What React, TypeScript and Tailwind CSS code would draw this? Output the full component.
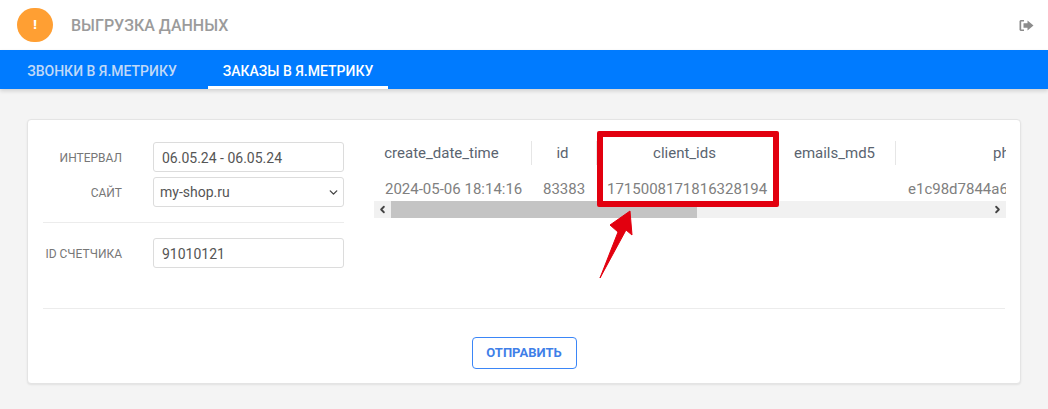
import { ChevronDown, ChevronLeft, ChevronRight } from "lucide-react";

const columns = [
  { name: "create_date_time", value: "2024-05-06 18:14:16", width: "w-[158px]", head: "pr-[22px]", cell: "pl-[11px]", border: true },
  { name: "id", value: "83383", width: "w-[65px]", head: "pr-[3px]", cell: "pl-[11px]", border: true },
  { name: "client_ids", value: "1715008171816328194", width: "w-[179px]", head: "pr-[4px]", cell: "pl-[10px]", border: false },
  { name: "emails_md5", value: "", width: "w-[120px]", head: "pr-[2px]", cell: "pl-[11px]", border: true },
  { name: "phones_md5", value: "e1c98d7844a66d2b1f0a3c7e59b48d10", width: "w-[280px]", head: "pr-[0px]", cell: "pl-[12px]", border: false },
];

const App = () => {
  return (
    <div className="relative w-full h-[409px] overflow-hidden bg-[#f4f4f4] font-['Roboto',sans-serif]">
      <header className="h-[50px] bg-white flex items-center pl-[17px] pr-[14px]">
        <div className="w-[36px] h-[34px] rounded-full bg-[#ff9f33] flex items-center justify-center text-white text-[13px] font-black">
          !
        </div>
        <h1 className="ml-[18px] pt-[2px] text-[16px] font-medium text-[#9b9b9b] uppercase">Выгрузка данных</h1>
        <svg className="ml-auto w-[15px] h-[13px]" viewBox="0 0 15 13" fill="#8c8c8c">
          <path d="M5 1H1.500L0.500 2v9l1 1H5v-1.600H2.200V2.600H5z" />
          <path d="M8.500 1.500L14.500 6.500L8.500 11.500V8.800H4.500V4.200H8.500z" />
        </svg>
      </header>

      <nav className="h-[39px] bg-[#007bff] shadow-[0_2px_4px_rgba(0,0,0,0.15)] flex pl-[12px] gap-[16px]">
        <div className="w-[180px] flex items-center justify-center pt-[4px] text-[14px] font-medium text-[#c0d9f7]">
          ЗВОНКИ В Я.МЕТРИКУ
        </div>
        <div className="w-[180px] flex items-center justify-center pt-[7px] text-[14px] font-medium text-white border-b-[3px] border-white">
          ЗАКАЗЫ В Я.МЕТРИКУ
        </div>
      </nav>

      <main className="px-[27px] pt-[30px]">
        <section className="w-[994px] h-[265px] bg-white border border-[#e4e4e4] rounded-[4px] shadow-[0_1px_2px_rgba(0,0,0,0.08)] px-[15px] flex flex-col">
          <div className="flex h-[189px] border-b border-[#ececec] gap-[30px]">
            <div className="w-[301px] pt-[22px]">
              <div className="flex flex-col gap-[5px]">
                <div className="flex items-center">
                  <label className="w-[79px] pt-[2px] text-right text-[12px] text-[#777] mr-[31px]">ИНТЕРВАЛ</label>
                  <div className="w-[191px] h-[30px] border border-[#dcdcdc] rounded-[3px] pl-[8px] pt-[2px] flex items-center text-[14px] text-[#555]">
                    06.05.24 - 06.05.24
                  </div>
                </div>
                <div className="flex items-center">
                  <label className="w-[79px] pt-[2px] text-right text-[12px] text-[#777] mr-[31px]">САЙТ</label>
                  <div className="w-[191px] h-[30px] border border-[#dcdcdc] rounded-[3px] pl-[6px] pr-[3px] flex items-center justify-between text-[14px] text-[#555]">
                    my-shop.ru
                    <ChevronDown className="w-[13px] h-[13px] text-[#444]" strokeWidth={2.5} />
                  </div>
                </div>
              </div>
              <div className="h-px bg-[#ececec] mt-[15px] mb-[15px]" />
              <div className="flex items-center">
                <label className="w-[79px] pt-[2px] text-right text-[12px] text-[#777] mr-[31px]">ID СЧЕТЧИКА</label>
                <div className="w-[191px] h-[30px] border border-[#dcdcdc] rounded-[3px] pl-[8px] pt-[2px] flex items-center text-[14px] text-[#555]">
                  91010121
                </div>
              </div>
            </div>

            <div className="w-[632px] pt-[21px]">
              <div className="overflow-hidden">
                <div className="flex w-max h-[24px]">
                  {columns.map((col) => (
                    <div
                      key={col.name}
                      className={`${col.width} ${col.head} ${col.border ? "border-r border-[#e6e6e6]" : ""} flex items-center justify-center text-[15px] text-[#5a6470] shrink-0`}
                    >
                      {col.name}
                    </div>
                  ))}
                </div>
                <div className="flex w-max h-[36px] items-center pt-[12px]">
                  {columns.map((col) => (
                    <div
                      key={col.name}
                      className={`${col.width} ${col.cell} text-[15px] text-[#808080] shrink-0 whitespace-nowrap`}
                    >
                      {col.value}
                    </div>
                  ))}
                </div>
              </div>
              <div className="h-[17px] bg-[#f1f1f1] flex items-center">
                <div className="w-[17px] flex justify-center">
                  <ChevronLeft className="w-[11px] h-[11px] text-[#444]" strokeWidth={4} />
                </div>
                <div className="w-[306px] h-full bg-[#c4c4c4]" />
                <div className="ml-auto w-[17px] flex justify-center">
                  <ChevronRight className="w-[11px] h-[11px] text-[#444]" strokeWidth={4} />
                </div>
              </div>
            </div>
          </div>

          <div className="flex justify-center pt-[28px]">
            <button className="w-[105px] h-[32px] border border-[#3b86f7] rounded-[4px] text-[13px] font-bold text-[#3f7fe8]">
              ОТПРАВИТЬ
            </button>
          </div>
        </section>
      </main>

      {/* annotation drawn over the screenshot */}
      <div className="absolute left-[597px] top-[131px] w-[182px] h-[76px] border-[6px] border-[#e2000f] rounded-[2px]" />
      <svg className="absolute left-[595px] top-[208px] w-[45px] h-[74px]" viewBox="0 0 45 74" fill="#e2000f">
        <path d="M5 70L23 24L15 17L35 3L37 27L31 22Z" stroke="#e2000f" strokeLinejoin="round" strokeWidth="1" />
      </svg>
    </div>
  );
};

export default App;
